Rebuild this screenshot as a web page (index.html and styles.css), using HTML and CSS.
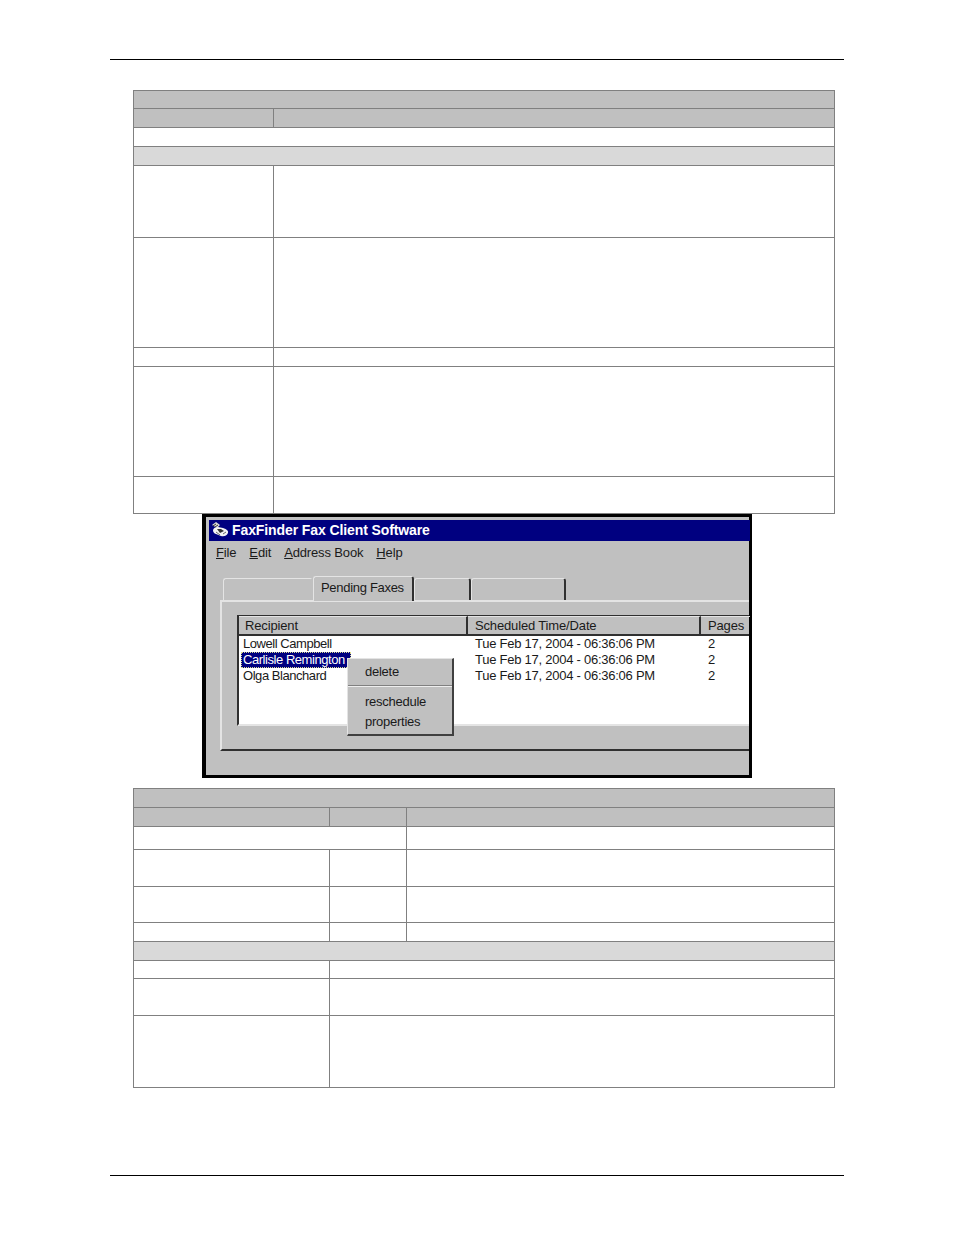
FILE: index.html
```html
<!DOCTYPE html>
<html lang="en">
<head>
    <meta charset="UTF-8">
    <title>FaxFinder Fax Client Software</title>
    <link rel="stylesheet" href="styles.css">
</head>
<body>
    <div class="page">
        <div class="rule rule-top"></div>

        <table class="grid grid-first">
            <colgroup><col class="col-a"><col></colgroup>
            <tr class="h18"><td class="head" colspan="2"></td></tr>
            <tr class="h19"><td class="head"></td><td class="head"></td></tr>
            <tr class="h19"><td colspan="2"></td></tr>
            <tr class="h19"><td class="section" colspan="2"></td></tr>
            <tr class="h72"><td></td><td></td></tr>
            <tr class="h110"><td></td><td></td></tr>
            <tr class="h19"><td></td><td></td></tr>
            <tr class="h110"><td></td><td></td></tr>
            <tr class="h37"><td></td><td></td></tr>
        </table>

        <div class="window">
            <div class="titlebar">
                <svg class="app-icon" width="18" height="16" viewBox="0 0 18 16">
                    <path d="M1 3 L5 0 L9 3 L6 6 Z" fill="#d8d8d8"/>
                    <path d="M2 4 L5 2 M4 5 L7 3" stroke="#333" stroke-width="1"/>
                    <path d="M2 8 Q3 5 7 5 L12 6 Q18 8 17 11 Q15 15 10 14 L5 12 Q2 11 2 8 Z" fill="#f4f4f4"/>
                    <path d="M6 7 L10 7 L13 9 L9 11 Z" fill="#333"/>
                    <path d="M5 10 L9 13 M12 12 L15 10" stroke="#666" stroke-width="1"/>
                </svg>
                <span>FaxFinder Fax Client Software</span>
            </div>
            <div class="menubar">
                <span><u>F</u>ile</span>
                <span><u>E</u>dit</span>
                <span><u>A</u>ddress Book</span>
                <span><u>H</u>elp</span>
            </div>
            <div class="tabs">
                <div class="tab tab-1"></div>
                <div class="tab tab-active">Pending Faxes</div>
                <div class="tab tab-3"></div>
                <div class="tab tab-4"></div>
            </div>
            <div class="panel">
                <div class="list">
                    <div class="list-head">
                        <div class="hcell c-name">Recipient</div>
                        <div class="hcell c-time">Scheduled Time/Date</div>
                        <div class="hcell c-pages">Pages</div>
                    </div>
                    <div class="list-row">
                        <div class="c-name cell"><span>Lowell Campbell</span></div>
                        <div class="c-time cell">Tue Feb 17, 2004 - 06:36:06 PM</div>
                        <div class="c-pages cell">2</div>
                    </div>
                    <div class="list-row">
                        <div class="c-name cell"><span class="selected">Carlisle Remington</span></div>
                        <div class="c-time cell">Tue Feb 17, 2004 - 06:36:06 PM</div>
                        <div class="c-pages cell">2</div>
                    </div>
                    <div class="list-row">
                        <div class="c-name cell"><span>Olga Blanchard</span></div>
                        <div class="c-time cell">Tue Feb 17, 2004 - 06:36:06 PM</div>
                        <div class="c-pages cell">2</div>
                    </div>
                    <div class="context-menu">
                        <div class="menu-item">delete</div>
                        <div class="menu-sep"></div>
                        <div class="menu-item">reschedule</div>
                        <div class="menu-item">properties</div>
                    </div>
                </div>
            </div>
        </div>

        <table class="grid grid-second">
            <colgroup><col class="col-b"><col class="col-c"><col></colgroup>
            <tr class="h19"><td class="head" colspan="3"></td></tr>
            <tr class="h19"><td class="head"></td><td class="head"></td><td class="head"></td></tr>
            <tr class="h23"><td colspan="2"></td><td></td></tr>
            <tr class="h37"><td></td><td></td><td></td></tr>
            <tr class="h36"><td></td><td></td><td></td></tr>
            <tr class="h19"><td></td><td></td><td></td></tr>
            <tr class="h19"><td class="section" colspan="3"></td></tr>
            <tr class="h18"><td></td><td colspan="2"></td></tr>
            <tr class="h37"><td></td><td colspan="2"></td></tr>
            <tr class="h72"><td></td><td colspan="2"></td></tr>
        </table>

        <div class="rule rule-bottom"></div>
    </div>
</body>
</html>
```

FILE: styles.css
```css
* {
    box-sizing: border-box;
}

body {
    margin: 0;
    background: #fff;
    font-family: "Liberation Sans", Arial, sans-serif;
}

.page {
    width: 954px;
    height: 1235px;
    padding-top: 59px;
}

.rule {
    height: 1px;
    margin: 0 110px;
    background: #000;
}

.rule-bottom {
    margin-top: 87px;
}

/* tablas vacias */
.grid {
    width: 702px;
    margin-left: 133px;
    border-collapse: collapse;
    table-layout: fixed;
}

.grid td {
    padding: 0;
    border: 1px solid #808080;
}

.grid-first {
    margin-top: 30px;
}

.grid-second {
    margin-top: 10px;
}

.col-a { width: 140px; }
.col-b { width: 196px; }
.col-c { width: 77px; }

.head { background: #c0c0c0; }
.section { background: #d9d9d9; }

.h18 { height: 18px; }
.h19 { height: 19px; }
.h23 { height: 23px; }
.h36 { height: 36px; }
.h37 { height: 37px; }
.h72 { height: 72px; }
.h110 { height: 110px; }

/* ventana */
.window {
    width: 550px;
    height: 264px;
    margin-left: 202px;
    padding: 3px 0 0 4px;
    border-style: solid;
    border-color: #000;
    border-width: 3px 3px 3px 4px;
    background: #c0c0c0;
    font-size: 13px;
    letter-spacing: -0.25px;
    color: #1a1a1a;
}

.titlebar {
    display: flex;
    align-items: center;
    gap: 3px;
    height: 21px;
    margin-left: -1px;
    margin-right: -1px;
    padding-left: 2px;
    padding-bottom: 2px;
    background: #000080;
    color: #fff;
    font-size: 14px;
    font-weight: bold;
    letter-spacing: -0.1px;
}

.menubar {
    display: flex;
    gap: 13px;
    height: 35px;
    padding: 4px 0 0 6px;
    line-height: 16px;
    letter-spacing: -0.15px;
}

.tabs {
    display: flex;
    align-items: flex-end;
    height: 24px;
    padding-left: 13px;
}

.tab {
    height: 22px;
    border-top: 1px solid #e4e4e4;
    border-left: 1px solid #e4e4e4;
    border-right: 2px solid #303030;
    border-radius: 3px 3px 0 0;
}

.tab-1 { width: 90px; border-right-color: #c0c0c0; }
.tab-3 { width: 57px; }
.tab-4 { width: 95px; }

.tab-active {
    position: relative;
    z-index: 1;
    width: 101px;
    height: 25px;
    margin-bottom: -1px;
    background: #c0c0c0;
    padding: 3px 0 0 7px;
    letter-spacing: -0.3px;
    line-height: 16px;
}

.panel {
    height: 151px;
    padding: 13px 0 0 15px;
    border-top: 2px solid #e4e4e4;
    border-left: 2px solid #e4e4e4;
    border-bottom: 2px solid #303030;
    margin-left: 10px;
}

.list {
    position: relative;
    height: 111px;
    background: #fff;
    border-top: 1px solid #303030;
    border-left: 2px solid #303030;
    border-bottom: 2px solid #e4e4e4;
}

.list-head,
.list-row {
    display: flex;
}

.list-head {
    height: 20px;
    background: #c0c0c0;
    border-bottom: 2px solid #303030;
    letter-spacing: -0.15px;
}

.list-row {
    height: 16px;
    line-height: 16px;
}

.hcell {
    flex: none;
    padding-left: 6px;
    line-height: 18px;
    border-right: 2px solid #303030;
    border-top: 1px solid #e4e4e4;
}

.hcell.c-time {
    padding-left: 7px;
}

.hcell:last-child {
    border-right: none;
    padding-left: 7px;
}

.c-name { width: 229px; }
.c-time { width: 233px; }
.c-pages { width: 49px; }

.cell { flex: none; padding-left: 7px; white-space: nowrap; }
.cell.c-name { padding-left: 2px; letter-spacing: -0.45px; }

.cell.c-name span {
    display: inline-block;
    height: 16px;
    padding: 0 6px 0 2px;
}

.cell.c-name .selected {
    background: #000080;
    color: #fff;
    outline: 1px dotted #d8d890;
    outline-offset: -1px;
}

.context-menu {
    position: absolute;
    left: 108px;
    top: 42px;
    width: 107px;
    height: 78px;
    padding-top: 3px;
    background: #c0c0c0;
    border-style: solid;
    border-width: 1px 2px 2px 1px;
    border-color: #e4e4e4 #404040 #404040 #e4e4e4;
}

.menu-item {
    height: 20px;
    padding-left: 17px;
    line-height: 20px;
}

.menu-sep {
    height: 2px;
    margin: 3px 0 5px;
    background: #808080;
    border-bottom: 1px solid #eee;
}
```
